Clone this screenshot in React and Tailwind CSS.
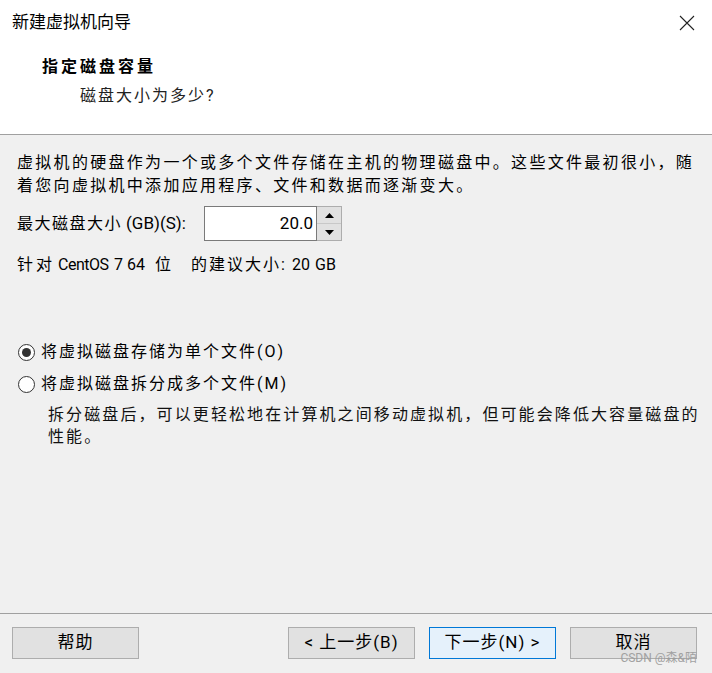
import React from 'react'

const font = { fontFamily: 'Roboto, "Noto Sans CJK SC", sans-serif' }

const Radio = ({ checked, label }) => (
  <div className="flex items-center h-[24px]">
    <div className="ml-[18px] w-[17px] h-[17px] rounded-full border border-[#333] bg-white flex items-center justify-center">
      {checked && <div className="w-[9px] h-[9px] rounded-full bg-[#333]" />}
    </div>
    <span className="ml-[6px] text-[16px] tracking-[2px] text-black">{label}</span>
  </div>
)

const Button = ({ children, primary }) => (
  <button
    className={`h-[32px] w-[127px] text-[17px] tracking-[1px] text-black border ${
      primary ? 'bg-[#e5f1fb] border-[#0078d7]' : 'bg-[#e1e1e1] border-[#adadad]'
    }`}
  >
    {children}
  </button>
)

export default function App() {
  return (
    <div className="w-[712px] h-[673px] bg-[#f0f0f0] flex flex-col relative overflow-hidden" style={font}>
      {/* header */}
      <div className="bg-white h-[135px] border-b border-[#a0a0a0] shrink-0">
        <div className="h-[46px] flex items-center justify-between pl-[12px] pr-[17px]">
          <span className="text-[17px] text-black">新建虚拟机向导</span>
          <svg width="16" height="16" viewBox="0 0 16 16">
            <path d="M1 1 L15 15 M15 1 L1 15" stroke="#222" strokeWidth="1.1" />
          </svg>
        </div>
        <div className="pl-[42px] mt-[9px] text-[16px] font-bold tracking-[3px] leading-[24px] text-black">指定磁盘容量</div>
        <div className="pl-[80px] mt-[5px] text-[16px] tracking-[2px] leading-[24px] text-[#222]">磁盘大小为多少?</div>
      </div>

      {/* body */}
      <div className="flex-1 pl-[17px] pr-[8px] text-black">
        <p className="mt-[16px] text-[16px] leading-[23px] tracking-[2.3px] whitespace-nowrap">
          虚拟机的硬盘作为一个或多个文件存储在主机的物理磁盘中。这些文件最初很小，随
          <br />
          着您向虚拟机中添加应用程序、文件和数据而逐渐变大。
        </p>
        <div className="mt-[9px] flex items-center h-[35px]">
          <span className="w-[187px] text-[16px] whitespace-nowrap">
            <span className="tracking-[1.5px]">最大磁盘大小</span> <span className="text-[17px]">(GB)(S):</span>
          </span>
          <div className="flex h-[35px]">
            <div className="w-[113px] h-full bg-white border border-[#7a7a7a] flex items-center justify-end pr-[3px] text-[17px]">20.0</div>
            <div className="w-[25px] h-full flex flex-col border border-l-0 border-[#adadad] bg-[#e1e1e1]">
              <div className="flex-1 flex items-center justify-center border-b border-[#c8c8c8]">
                <svg width="9" height="5" viewBox="0 0 9 5"><path d="M0 5 L4.5 0 L9 5 Z" fill="#000" /></svg>
              </div>
              <div className="flex-1 flex items-center justify-center">
                <svg width="9" height="5" viewBox="0 0 9 5"><path d="M0 0 L4.5 5 L9 0 Z" fill="#000" /></svg>
              </div>
            </div>
          </div>
        </div>
        <div className="mt-[12px] flex items-center text-[16px] leading-[23px] whitespace-nowrap">
          <span className="w-[41px] shrink-0 tracking-[3px]">针对</span>
          <span className="w-[56px] shrink-0 tracking-[-0.5px]">CentOS</span>
          <span className="w-[13px] shrink-0">7</span>
          <span className="w-[28px] shrink-0">64</span>
          <span className="w-[36px] shrink-0">位</span>
          <span className="w-[101px] shrink-0 tracking-[2px]">的建议大小:</span>
          <span className="w-[23px] shrink-0">20</span>
          <span>GB</span>
        </div>

        <div className="mt-[64px] -ml-[17px]">
          <Radio checked label="将虚拟磁盘存储为单个文件(O)" />
          <div className="mt-[8px]">
            <Radio label="将虚拟磁盘拆分成多个文件(M)" />
          </div>
        </div>
        <p className="mt-[8px] pl-[31px] text-[16px] leading-[22px] tracking-[2.1px] text-[#111] whitespace-nowrap">
          拆分磁盘后，可以更轻松地在计算机之间移动虚拟机，但可能会降低大容量磁盘的
          <br />
          性能。
        </p>
      </div>

      {/* footer */}
      <div className="h-[60px] border-t border-[#a0a0a0] shrink-0 flex items-start pt-[13px] pl-[12px] pr-[15px]">
        <Button>帮助</Button>
        <div className="flex-1" />
        <div className="flex gap-[14px]">
          <Button>&lt; 上一步(B)</Button>
          <Button primary>下一步(N) &gt;</Button>
          <Button>取消</Button>
        </div>
      </div>

      <div className="absolute right-[15px] bottom-[6px] text-[12px] text-[#9a9a9a] opacity-90">CSDN @森&amp;陌</div>
    </div>
  )
}
